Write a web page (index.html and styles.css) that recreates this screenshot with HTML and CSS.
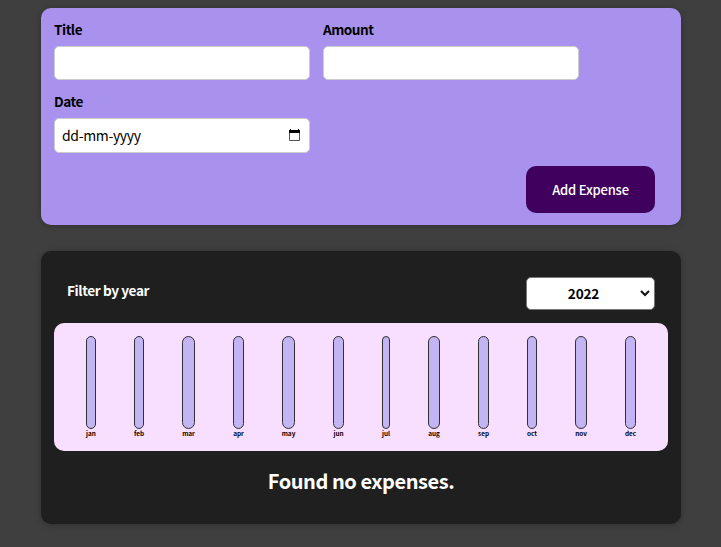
FILE: index.html
```html
<!DOCTYPE html>
<html lang="en">
<head>
<meta charset="utf-8">
<title>Expenses</title>
<link rel="stylesheet" href="styles.css">
</head>
<body>
<form class="card new-expense">
  <div class="controls">
    <div class="control"><label for="title">Title</label><input class="field" id="title" type="text"></div>
    <div class="control"><label for="amount">Amount</label><input class="field" id="amount" type="text"></div>
    <div class="control">
      <label>Date</label>
      <div class="field date"><span>dd-mm-yyyy</span>
        <svg width="11" height="12" viewBox="0 0 11 12"><path d="M.5 1.5h10v10H.5z" fill="none" stroke="#555"/><path d="M0 1h11v3H0zM1 0h1v1H1zM9 0h1v1H9z"/></svg>
      </div>
    </div>
  </div>
  <div class="actions"><button type="button">Add Expense</button></div>
</form>
<section class="card expenses">
  <div class="filter">
    <label>Filter by year</label>
    <div class="select"><span>2022</span>
      <svg width="10" height="7" viewBox="0 0 10 7"><path d="M1 1l4 4 4-4" fill="none" stroke="#111" stroke-width="2"/></svg>
    </div>
  </div>
  <div class="chart">
    <div class="bar" style="width:10px"><i></i><span>jan</span></div>
    <div class="bar" style="width:10px"><i></i><span>feb</span></div>
    <div class="bar" style="width:13px"><i></i><span>mar</span></div>
    <div class="bar" style="width:11px"><i></i><span>apr</span></div>
    <div class="bar" style="width:13px"><i></i><span>may</span></div>
    <div class="bar" style="width:11px"><i></i><span>jun</span></div>
    <div class="bar" style="width:8px"><i></i><span>jul</span></div>
    <div class="bar" style="width:12px"><i></i><span>aug</span></div>
    <div class="bar" style="width:11px"><i></i><span>sep</span></div>
    <div class="bar" style="width:10px"><i></i><span>oct</span></div>
    <div class="bar" style="width:12px"><i></i><span>nov</span></div>
    <div class="bar" style="width:11px"><i></i><span>dec</span></div>
  </div>
  <h2>Found no expenses.</h2>
</section>
</body>
</html>
```
FILE: styles.css
```css
* { box-sizing: border-box; }
body {
  margin: 0;
  padding: 8px 40px 0 41px;
  height: 547px;
  overflow: hidden;
  background: #3f3f3f;
  font-family: "Noto Sans CJK JP", "Noto Sans", sans-serif;
}
.card {
  border-radius: 10px;
  box-shadow: 0 1px 6px rgba(0, 0, 0, .25);
}
.new-expense {
  height: 217px;
  padding: 12px 26px 12px 13px;
  background: #a892ee;
}
.controls {
  display: grid;
  grid-template-columns: 256px 256px;
  column-gap: 13px;
  row-gap: 12px;
}
.control label {
  display: block;
  height: 20px;
  margin-bottom: 6px;
  font-size: 13.6px;
  font-weight: 700;
  line-height: 18px;
  letter-spacing: -.5px;
}
.field {
  display: block;
  width: 256px;
  height: 34px;
  border: 1px solid #ccc;
  border-radius: 5px;
  background: #fff;
}
.date {
  display: flex;
  align-items: center;
  justify-content: space-between;
  height: 35px;
  padding: 0 9px 1px 7px;
  font-size: 14px;
  line-height: 20px;
  letter-spacing: -.35px;
}
.date svg { margin-top: -1px; }
.actions {
  display: flex;
  justify-content: flex-end;
  margin-top: 13px;
}
button {
  width: 129px;
  height: 47px;
  padding: 0;
  border: 0;
  border-radius: 10px;
  background: #40005d;
  color: #fff;
  font: 500 13px "Noto Sans CJK JP", "Noto Sans", sans-serif;
  letter-spacing: -.2px;
}
.expenses {
  height: 273px;
  margin-top: 26px;
  padding: 26px 13px 0;
  background: #1f1f1f;
}
.filter {
  display: flex;
  justify-content: space-between;
  padding: 0 13px;
  color: #fff;
  font-size: 13.6px;
  font-weight: 700;
}
.filter label {
  line-height: 26px;
  letter-spacing: -.4px;
}
.select {
  display: flex;
  align-items: center;
  width: 129px;
  height: 33px;
  padding: 0 4px 1px 0;
  border: 1px solid #767676;
  border-radius: 5px;
  background: #fff;
  color: #000;
  letter-spacing: -.2px;
}
.select span { flex: 1; text-align: center; }
.chart {
  display: flex;
  justify-content: space-around;
  height: 128px;
  margin-top: 13px;
  padding: 13px;
  border-radius: 10px;
  background: #f8dfff;
}
.bar {
  display: flex;
  flex-direction: column;
  align-items: center;
}
.bar i {
  width: 100%;
  height: 93px;
  border: 1px solid #313131;
  border-radius: 10px;
  background: #c3b4f3;
}
.bar span {
  font-size: 6.4px;
  font-weight: 700;
  line-height: 9px;
}
h2 {
  margin: 15px 0 0;
  color: #fff;
  font-size: 20px;
  font-weight: 700;
  line-height: 30px;
  letter-spacing: -.45px;
  text-align: center;
}
```
